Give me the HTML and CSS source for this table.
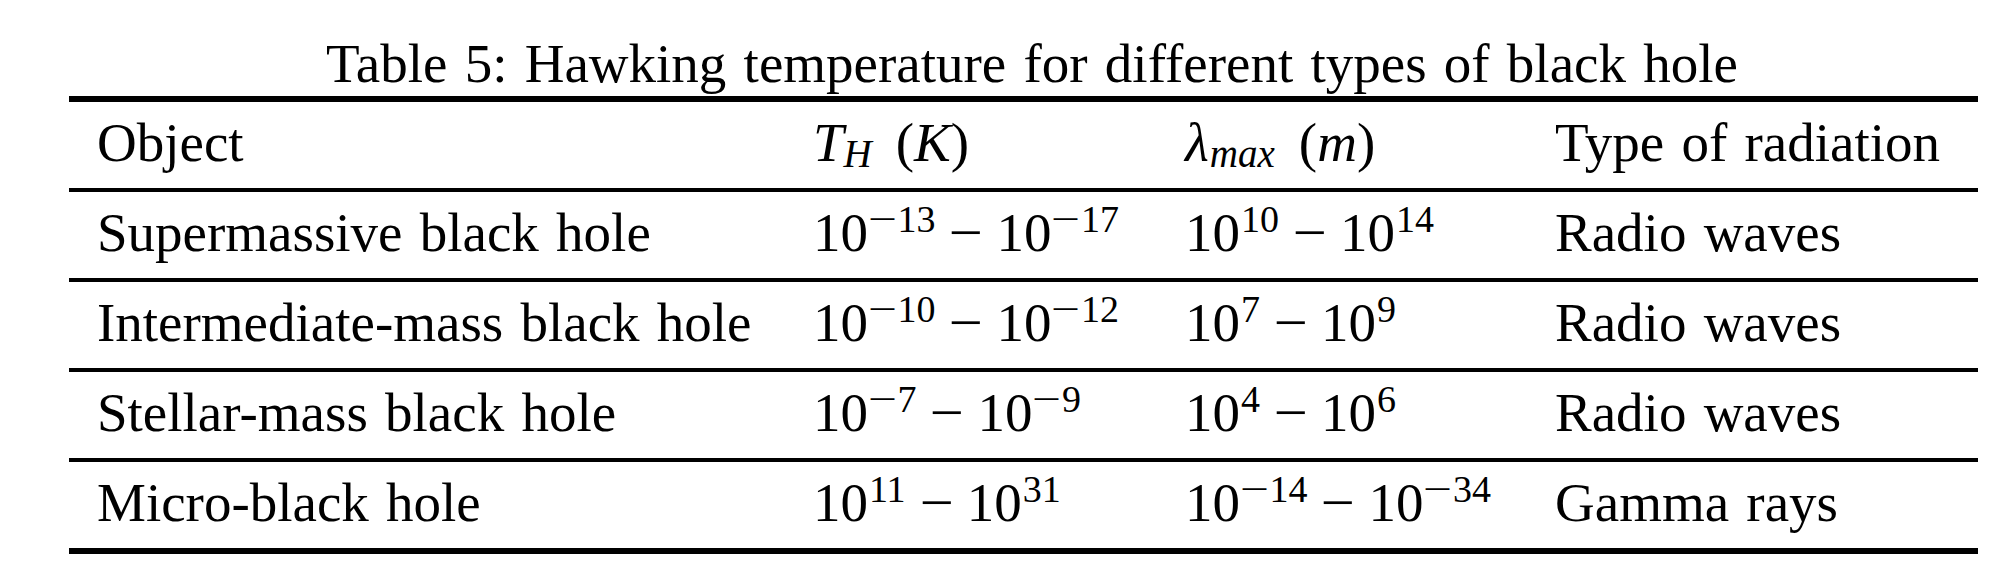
FILE: index.html
```html
<!DOCTYPE html>
<html lang="en">
<head>
<meta charset="utf-8">
<title>Table 5</title>
<link rel="stylesheet" href="styles.css">
</head>
<body>
<div class="sheet">
  <div class="caption">Table 5: Hawking temperature for different types of black hole</div>
  <div class="table">
    <div class="row">
      <div class="cell">Object</div>
      <div class="cell"><span class="mi">T</span><span class="sub">H</span><span class="gap"></span>(<span class="mi">K</span>)</div>
      <div class="cell"><span class="lam">λ</span><span class="sub">max</span><span class="gap"></span>(<span class="mi">m</span>)</div>
      <div class="cell">Type of radiation</div>
    </div>
    <div class="row">
      <div class="cell">Supermassive black hole</div>
      <div class="cell">10<span class="sup"><span class="neg">−</span>13</span><span class="op">−</span>10<span class="sup"><span class="neg">−</span>17</span></div>
      <div class="cell">10<span class="sup">10</span><span class="op">−</span>10<span class="sup">14</span></div>
      <div class="cell">Radio waves</div>
    </div>
    <div class="row">
      <div class="cell">Intermediate-mass black hole</div>
      <div class="cell">10<span class="sup"><span class="neg">−</span>10</span><span class="op">−</span>10<span class="sup"><span class="neg">−</span>12</span></div>
      <div class="cell">10<span class="sup">7</span><span class="op">−</span>10<span class="sup">9</span></div>
      <div class="cell">Radio waves</div>
    </div>
    <div class="row">
      <div class="cell">Stellar-mass black hole</div>
      <div class="cell">10<span class="sup"><span class="neg">−</span>7</span><span class="op">−</span>10<span class="sup"><span class="neg">−</span>9</span></div>
      <div class="cell">10<span class="sup">4</span><span class="op">−</span>10<span class="sup">6</span></div>
      <div class="cell">Radio waves</div>
    </div>
    <div class="row last">
      <div class="cell">Micro-black hole</div>
      <div class="cell">10<span class="sup">11</span><span class="op">−</span>10<span class="sup">31</span></div>
      <div class="cell">10<span class="sup"><span class="neg">−</span>14</span><span class="op">−</span>10<span class="sup"><span class="neg">−</span>34</span></div>
      <div class="cell">Gamma rays</div>
    </div>
  </div>
</div>
</body>
</html>
```

FILE: styles.css
```css
html, body {
  margin: 0;
  padding: 0;
  background: #ffffff;
}

body {
  font-family: "Liberation Serif", "Times New Roman", serif;
  color: #000000;
  font-size: 55px;
}

.sheet {
  width: 1909px;
  padding: 36px 0 0 69px;
}

.caption {
  text-align: center;
  line-height: 55px;
  height: 55px;
  margin-bottom: 5px;
  padding-left: 17px;
  word-spacing: 3.5px;
  white-space: nowrap;
}

.table {
  border-top: 6px solid #000;
  border-bottom: 6px solid #000;
}

.row {
  display: grid;
  grid-template-columns: 716px 372px 370px 451px;
  border-bottom: 4px solid #000;
}

.row.last {
  border-bottom: 0;
}

.cell {
  height: 86px;
  box-sizing: border-box;
  padding: 0 0 5px 28px;
  line-height: 81px;
  white-space: nowrap;
  word-spacing: 3.5px;
}

.mi {
  font-style: italic;
}

.lam {
  font-style: italic;
  padding-right: 1px;
}

.sub {
  font-style: italic;
  font-size: 39px;
  vertical-align: -6px;
  line-height: 0;
}

.sup {
  font-size: 38px;
  vertical-align: 19px;
  line-height: 0;
  padding-left: 1px;
}

.neg {
  display: inline-block;
  transform: scaleX(1.35);
  padding: 0 4px 0 3px;
}

.op {
  display: inline-block;
  transform: scaleX(1.1);
  padding: 0 15px;
}

.gap {
  display: inline-block;
  width: 24px;
}
```
